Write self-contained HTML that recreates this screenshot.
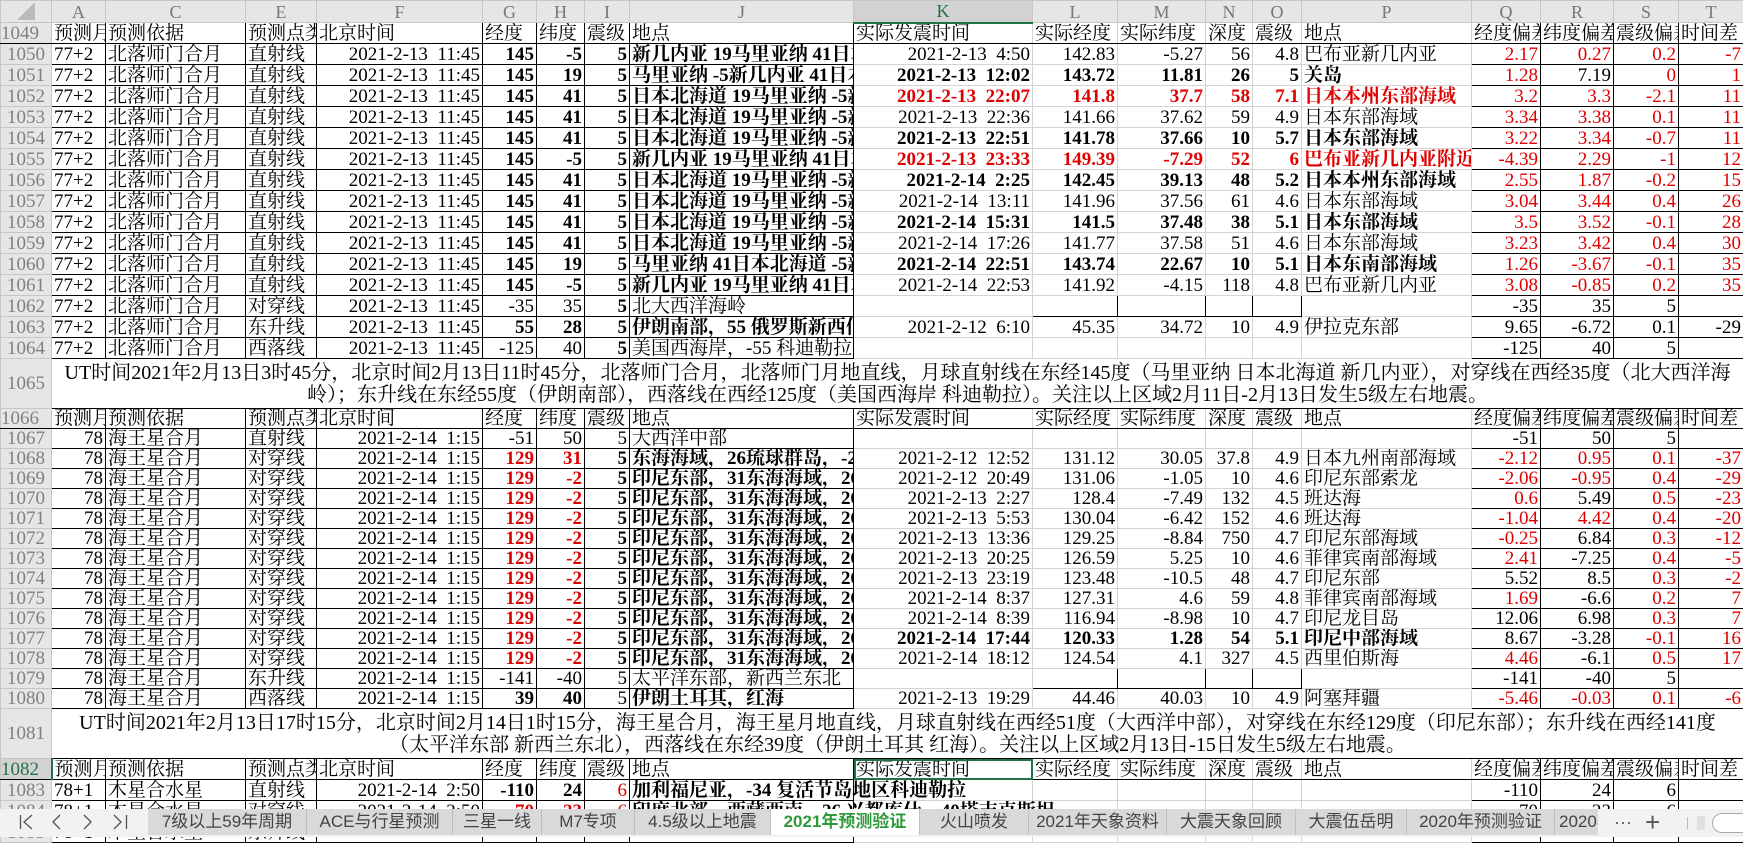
<!DOCTYPE html>
<html><head><meta charset="utf-8">
<style>
html,body{margin:0;padding:0;width:1743px;height:837px;overflow:hidden;background:#fff;}
table{border-collapse:collapse;table-layout:fixed;width:1743px;position:absolute;left:0;top:0;font-family:"Liberation Serif","Noto Serif CJK SC",serif;font-size:19px;color:#000;}
td{border:1px solid #d4d4d4;padding:0 2px;white-space:nowrap;overflow:hidden;line-height:18px;vertical-align:bottom;}
tr.c{height:22px;}
tr.c td{background:#e6e6e6;color:#777;text-align:center;font-size:18px;border-color:#c6c6c6;line-height:20px;vertical-align:middle;}
tr.c td.sel{background:#d2d2d2;color:#217346;border-bottom:2px solid #217346;}
td.n{background:#e6e6e6;color:#808080;text-align:center;border-color:#c6c6c6;padding:0;}
td.n.g{background:#d2d2d2;color:#217346;border-right:2px solid #217346;}
tr.d td:nth-child(n+2):nth-child(-n+9),tr.d td:nth-child(n+16){border-color:#000;}
tr.d td:nth-child(5),tr.d td:nth-child(6),tr.d td:nth-child(7),tr.d td:nth-child(8),
tr.d td:nth-child(n+10):nth-child(-n+14),tr.d td:nth-child(n+16){text-align:right;}
tr.d2 td:nth-child(2){text-align:right;}
tr.d.h td{border-bottom:1px solid #000;text-align:left !important;}
tr.r1{height:21px;}
tr.r2{height:20px;}
tr.tall{height:50px;}
.b{font-weight:bold;}
.e{color:#e00000;}
td.v{overflow:visible;}
td.m{text-align:center;vertical-align:middle;font-size:20px;line-height:22px;border-bottom:1px solid #000;}
td.selc{outline:2px solid #217346;outline-offset:-2px;}
#tabs{position:absolute;left:0;top:809px;width:1743px;height:28px;background:#f2f2f2;font-family:"Liberation Sans","Noto Sans CJK SC",sans-serif;font-size:17px;color:#444;}
#tabs .t{position:absolute;top:0;height:26px;line-height:26px;text-align:center;background:#d9d9d9;border-right:1px solid #bfbfbf;box-sizing:border-box;overflow:hidden;white-space:nowrap;}
#tabs .t.a{background:#fff;color:#2f9a3c;font-weight:bold;}
#tabs .nv{position:absolute;top:0;line-height:26px;font-size:20px;color:#555;}
</style></head><body>
<table>
<colgroup>
<col style="width:51px"><col style="width:54px"><col style="width:140px"><col style="width:71px"><col style="width:166px"><col style="width:54px"><col style="width:48px"><col style="width:45px"><col style="width:224px"><col style="width:179px"><col style="width:85px"><col style="width:88px"><col style="width:47px"><col style="width:49px"><col style="width:170px"><col style="width:69px"><col style="width:73px"><col style="width:65px"><col style="width:65px">
</colgroup>
<tr class="c"><td style="color:#bbb">◢</td><td>A</td><td>C</td><td>E</td><td>F</td><td>G</td><td>H</td><td>I</td><td>J</td><td class="sel">K</td><td>L</td><td>M</td><td>N</td><td>O</td><td>P</td><td>Q</td><td>R</td><td>S</td><td>T</td></tr>

<tr class="d h r1"><td class="n">1049</td><td>预测月份</td><td>预测依据</td><td>预测点类型</td><td>北京时间</td><td>经度</td><td>纬度</td><td>震级</td><td>地点</td><td>实际发震时间</td><td>实际经度</td><td>实际纬度</td><td>深度</td><td>震级</td><td>地点</td><td>经度偏差</td><td>纬度偏差</td><td>震级偏差</td><td>时间差</td></tr>
<tr class="d r1"><td class="n">1050</td><td>77+2</td><td>北落师门合月</td><td>直射线</td><td>2021-2-13&ensp;11:45</td><td class="b">145</td><td class="b">-5</td><td class="b">5</td><td class="b">新几内亚 19马里亚纳 41日本北海道</td><td>2021-2-13&ensp;4:50</td><td>142.83</td><td>-5.27</td><td>56</td><td>4.8</td><td>巴布亚新几内亚</td><td class="e">2.17</td><td class="e">0.27</td><td class="e">0.2</td><td class="e">-7</td></tr>
<tr class="d r1"><td class="n">1051</td><td>77+2</td><td>北落师门合月</td><td>直射线</td><td>2021-2-13&ensp;11:45</td><td class="b">145</td><td class="b">19</td><td class="b">5</td><td class="b">马里亚纳 -5新几内亚 41日本北海道</td><td class="b">2021-2-13&ensp;12:02</td><td class="b">143.72</td><td class="b">11.81</td><td class="b">26</td><td class="b">5</td><td class="b">关岛</td><td class="e">1.28</td><td>7.19</td><td class="e">0</td><td class="e">1</td></tr>
<tr class="d r1"><td class="n">1052</td><td>77+2</td><td>北落师门合月</td><td>直射线</td><td>2021-2-13&ensp;11:45</td><td class="b">145</td><td class="b">41</td><td class="b">5</td><td class="b">日本北海道 19马里亚纳 -5新几内亚</td><td class="b e">2021-2-13&ensp;22:07</td><td class="b e">141.8</td><td class="b e">37.7</td><td class="b e">58</td><td class="b e">7.1</td><td class="b e">日本本州东部海域</td><td class="e">3.2</td><td class="e">3.3</td><td class="e">-2.1</td><td class="e">11</td></tr>
<tr class="d r1"><td class="n">1053</td><td>77+2</td><td>北落师门合月</td><td>直射线</td><td>2021-2-13&ensp;11:45</td><td class="b">145</td><td class="b">41</td><td class="b">5</td><td class="b">日本北海道 19马里亚纳 -5新几内亚</td><td>2021-2-13&ensp;22:36</td><td>141.66</td><td>37.62</td><td>59</td><td>4.9</td><td>日本东部海域</td><td class="e">3.34</td><td class="e">3.38</td><td class="e">0.1</td><td class="e">11</td></tr>
<tr class="d r1"><td class="n">1054</td><td>77+2</td><td>北落师门合月</td><td>直射线</td><td>2021-2-13&ensp;11:45</td><td class="b">145</td><td class="b">41</td><td class="b">5</td><td class="b">日本北海道 19马里亚纳 -5新几内亚</td><td class="b">2021-2-13&ensp;22:51</td><td class="b">141.78</td><td class="b">37.66</td><td class="b">10</td><td class="b">5.7</td><td class="b">日本东部海域</td><td class="e">3.22</td><td class="e">3.34</td><td class="e">-0.7</td><td class="e">11</td></tr>
<tr class="d r1"><td class="n">1055</td><td>77+2</td><td>北落师门合月</td><td>直射线</td><td>2021-2-13&ensp;11:45</td><td class="b">145</td><td class="b">-5</td><td class="b">5</td><td class="b">新几内亚 19马里亚纳 41日本北海道</td><td class="b e">2021-2-13&ensp;23:33</td><td class="b e">149.39</td><td class="b e">-7.29</td><td class="b e">52</td><td class="b e">6</td><td class="b e">巴布亚新几内亚附近</td><td class="e">-4.39</td><td class="e">2.29</td><td class="e">-1</td><td class="e">12</td></tr>
<tr class="d r1"><td class="n">1056</td><td>77+2</td><td>北落师门合月</td><td>直射线</td><td>2021-2-13&ensp;11:45</td><td class="b">145</td><td class="b">41</td><td class="b">5</td><td class="b">日本北海道 19马里亚纳 -5新几内亚</td><td class="b">2021-2-14&ensp;2:25</td><td class="b">142.45</td><td class="b">39.13</td><td class="b">48</td><td class="b">5.2</td><td class="b">日本本州东部海域</td><td class="e">2.55</td><td class="e">1.87</td><td class="e">-0.2</td><td class="e">15</td></tr>
<tr class="d r1"><td class="n">1057</td><td>77+2</td><td>北落师门合月</td><td>直射线</td><td>2021-2-13&ensp;11:45</td><td class="b">145</td><td class="b">41</td><td class="b">5</td><td class="b">日本北海道 19马里亚纳 -5新几内亚</td><td>2021-2-14&ensp;13:11</td><td>141.96</td><td>37.56</td><td>61</td><td>4.6</td><td>日本东部海域</td><td class="e">3.04</td><td class="e">3.44</td><td class="e">0.4</td><td class="e">26</td></tr>
<tr class="d r1"><td class="n">1058</td><td>77+2</td><td>北落师门合月</td><td>直射线</td><td>2021-2-13&ensp;11:45</td><td class="b">145</td><td class="b">41</td><td class="b">5</td><td class="b">日本北海道 19马里亚纳 -5新几内亚</td><td class="b">2021-2-14&ensp;15:31</td><td class="b">141.5</td><td class="b">37.48</td><td class="b">38</td><td class="b">5.1</td><td class="b">日本东部海域</td><td class="e">3.5</td><td class="e">3.52</td><td class="e">-0.1</td><td class="e">28</td></tr>
<tr class="d r1"><td class="n">1059</td><td>77+2</td><td>北落师门合月</td><td>直射线</td><td>2021-2-13&ensp;11:45</td><td class="b">145</td><td class="b">41</td><td class="b">5</td><td class="b">日本北海道 19马里亚纳 -5新几内亚</td><td>2021-2-14&ensp;17:26</td><td>141.77</td><td>37.58</td><td>51</td><td>4.6</td><td>日本东部海域</td><td class="e">3.23</td><td class="e">3.42</td><td class="e">0.4</td><td class="e">30</td></tr>
<tr class="d r1"><td class="n">1060</td><td>77+2</td><td>北落师门合月</td><td>直射线</td><td>2021-2-13&ensp;11:45</td><td class="b">145</td><td class="b">19</td><td class="b">5</td><td class="b">马里亚纳 41日本北海道 -5新几内亚</td><td class="b">2021-2-14&ensp;22:51</td><td class="b">143.74</td><td class="b">22.67</td><td class="b">10</td><td class="b">5.1</td><td class="b">日本东南部海域</td><td class="e">1.26</td><td class="e">-3.67</td><td class="e">-0.1</td><td class="e">35</td></tr>
<tr class="d r1"><td class="n">1061</td><td>77+2</td><td>北落师门合月</td><td>直射线</td><td>2021-2-13&ensp;11:45</td><td class="b">145</td><td class="b">-5</td><td class="b">5</td><td class="b">新几内亚 19马里亚纳 41日本北海道</td><td>2021-2-14&ensp;22:53</td><td>141.92</td><td>-4.15</td><td>118</td><td>4.8</td><td>巴布亚新几内亚</td><td class="e">3.08</td><td class="e">-0.85</td><td class="e">0.2</td><td class="e">35</td></tr>
<tr class="d r1"><td class="n">1062</td><td>77+2</td><td>北落师门合月</td><td>对穿线</td><td>2021-2-13&ensp;11:45</td><td>-35</td><td>35</td><td class="b">5</td><td>北大西洋海岭</td><td></td><td style="border-color:#000"></td><td style="border-color:#000"></td><td style="border-color:#000"></td><td style="border-color:#000"></td><td></td><td>-35</td><td>35</td><td>5</td><td></td></tr>
<tr class="d r1"><td class="n">1063</td><td>77+2</td><td>北落师门合月</td><td>东升线</td><td>2021-2-13&ensp;11:45</td><td class="b">55</td><td class="b">28</td><td class="b">5</td><td class="b">伊朗南部，55 俄罗斯新西伯利亚</td><td>2021-2-12&ensp;6:10</td><td>45.35</td><td>34.72</td><td>10</td><td>4.9</td><td>伊拉克东部</td><td>9.65</td><td>-6.72</td><td>0.1</td><td>-29</td></tr>
<tr class="d r1"><td class="n">1064</td><td>77+2</td><td>北落师门合月</td><td>西落线</td><td>2021-2-13&ensp;11:45</td><td>-125</td><td>40</td><td class="b">5</td><td>美国西海岸，-55 科迪勒拉</td><td></td><td></td><td></td><td></td><td></td><td></td><td>-125</td><td>40</td><td>5</td><td></td></tr>
<tr class="tall"><td class="n" style="vertical-align:middle">1065</td><td class="m" colspan="18">UT时间2021年2月13日3时45分，北京时间2月13日11时45分，北落师门合月，北落师门月地直线，月球直射线在东经145度（马里亚纳 日本北海道 新几内亚），对穿线在西经35度（北大西洋海<br>岭）；东升线在东经55度（伊朗南部），西落线在西经125度（美国西海岸 科迪勒拉）。关注以上区域2月11日-2月13日发生5级左右地震。</td></tr>

<tr class="d h r2"><td class="n">1066</td><td>预测月份</td><td>预测依据</td><td>预测点类型</td><td>北京时间</td><td>经度</td><td>纬度</td><td>震级</td><td>地点</td><td>实际发震时间</td><td>实际经度</td><td>实际纬度</td><td>深度</td><td>震级</td><td>地点</td><td>经度偏差</td><td>纬度偏差</td><td>震级偏差</td><td>时间差</td></tr>
<tr class="d d2 r2"><td class="n">1067</td><td>78</td><td>海王星合月</td><td>直射线</td><td>2021-2-14&ensp;1:15</td><td>-51</td><td>50</td><td>5</td><td>大西洋中部</td><td></td><td></td><td></td><td></td><td></td><td></td><td>-51</td><td>50</td><td>5</td><td></td></tr>
<tr class="d d2 r2"><td class="n">1068</td><td>78</td><td>海王星合月</td><td>对穿线</td><td>2021-2-14&ensp;1:15</td><td class="b e">129</td><td class="b e">31</td><td class="b">5</td><td class="b">东海海域，26琉球群岛，-2印尼东部</td><td>2021-2-12&ensp;12:52</td><td>131.12</td><td>30.05</td><td>37.8</td><td>4.9</td><td>日本九州南部海域</td><td class="e">-2.12</td><td class="e">0.95</td><td class="e">0.1</td><td class="e">-37</td></tr>
<tr class="d d2 r2"><td class="n">1069</td><td>78</td><td>海王星合月</td><td>对穿线</td><td>2021-2-14&ensp;1:15</td><td class="b e">129</td><td class="b e">-2</td><td class="b">5</td><td class="b">印尼东部，31东海海域，26琉球</td><td>2021-2-12&ensp;20:49</td><td>131.06</td><td>-1.05</td><td>10</td><td>4.6</td><td>印尼东部索龙</td><td class="e">-2.06</td><td class="e">-0.95</td><td class="e">0.4</td><td class="e">-29</td></tr>
<tr class="d d2 r2"><td class="n">1070</td><td>78</td><td>海王星合月</td><td>对穿线</td><td>2021-2-14&ensp;1:15</td><td class="b e">129</td><td class="b e">-2</td><td class="b">5</td><td class="b">印尼东部，31东海海域，26琉球</td><td>2021-2-13&ensp;2:27</td><td>128.4</td><td>-7.49</td><td>132</td><td>4.5</td><td>班达海</td><td class="e">0.6</td><td>5.49</td><td class="e">0.5</td><td class="e">-23</td></tr>
<tr class="d d2 r2"><td class="n">1071</td><td>78</td><td>海王星合月</td><td>对穿线</td><td>2021-2-14&ensp;1:15</td><td class="b e">129</td><td class="b e">-2</td><td class="b">5</td><td class="b">印尼东部，31东海海域，26琉球</td><td>2021-2-13&ensp;5:53</td><td>130.04</td><td>-6.42</td><td>152</td><td>4.6</td><td>班达海</td><td class="e">-1.04</td><td class="e">4.42</td><td class="e">0.4</td><td class="e">-20</td></tr>
<tr class="d d2 r2"><td class="n">1072</td><td>78</td><td>海王星合月</td><td>对穿线</td><td>2021-2-14&ensp;1:15</td><td class="b e">129</td><td class="b e">-2</td><td class="b">5</td><td class="b">印尼东部，31东海海域，26琉球</td><td>2021-2-13&ensp;13:36</td><td>129.25</td><td>-8.84</td><td>750</td><td>4.7</td><td>印尼东部海域</td><td class="e">-0.25</td><td>6.84</td><td class="e">0.3</td><td class="e">-12</td></tr>
<tr class="d d2 r2"><td class="n">1073</td><td>78</td><td>海王星合月</td><td>对穿线</td><td>2021-2-14&ensp;1:15</td><td class="b e">129</td><td class="b e">-2</td><td class="b">5</td><td class="b">印尼东部，31东海海域，26琉球</td><td>2021-2-13&ensp;20:25</td><td>126.59</td><td>5.25</td><td>10</td><td>4.6</td><td>菲律宾南部海域</td><td class="e">2.41</td><td>-7.25</td><td class="e">0.4</td><td class="e">-5</td></tr>
<tr class="d d2 r2"><td class="n">1074</td><td>78</td><td>海王星合月</td><td>对穿线</td><td>2021-2-14&ensp;1:15</td><td class="b e">129</td><td class="b e">-2</td><td class="b">5</td><td class="b">印尼东部，31东海海域，26琉球</td><td>2021-2-13&ensp;23:19</td><td>123.48</td><td>-10.5</td><td>48</td><td>4.7</td><td>印尼东部</td><td>5.52</td><td>8.5</td><td class="e">0.3</td><td class="e">-2</td></tr>
<tr class="d d2 r2"><td class="n">1075</td><td>78</td><td>海王星合月</td><td>对穿线</td><td>2021-2-14&ensp;1:15</td><td class="b e">129</td><td class="b e">-2</td><td class="b">5</td><td class="b">印尼东部，31东海海域，26琉球</td><td>2021-2-14&ensp;8:37</td><td>127.31</td><td>4.6</td><td>59</td><td>4.8</td><td>菲律宾南部海域</td><td class="e">1.69</td><td>-6.6</td><td class="e">0.2</td><td class="e">7</td></tr>
<tr class="d d2 r2"><td class="n">1076</td><td>78</td><td>海王星合月</td><td>对穿线</td><td>2021-2-14&ensp;1:15</td><td class="b e">129</td><td class="b e">-2</td><td class="b">5</td><td class="b">印尼东部，31东海海域，26琉球</td><td>2021-2-14&ensp;8:39</td><td>116.94</td><td>-8.98</td><td>10</td><td>4.7</td><td>印尼龙目岛</td><td>12.06</td><td>6.98</td><td class="e">0.3</td><td class="e">7</td></tr>
<tr class="d d2 r2"><td class="n">1077</td><td>78</td><td>海王星合月</td><td>对穿线</td><td>2021-2-14&ensp;1:15</td><td class="b e">129</td><td class="b e">-2</td><td class="b">5</td><td class="b">印尼东部，31东海海域，26琉球</td><td class="b">2021-2-14&ensp;17:44</td><td class="b">120.33</td><td class="b">1.28</td><td class="b">54</td><td class="b">5.1</td><td class="b">印尼中部海域</td><td>8.67</td><td>-3.28</td><td class="e">-0.1</td><td class="e">16</td></tr>
<tr class="d d2 r2"><td class="n">1078</td><td>78</td><td>海王星合月</td><td>对穿线</td><td>2021-2-14&ensp;1:15</td><td class="b e">129</td><td class="b e">-2</td><td class="b">5</td><td class="b">印尼东部，31东海海域，26琉球</td><td>2021-2-14&ensp;18:12</td><td>124.54</td><td>4.1</td><td>327</td><td>4.5</td><td>西里伯斯海</td><td class="e">4.46</td><td>-6.1</td><td class="e">0.5</td><td class="e">17</td></tr>
<tr class="d d2 r2"><td class="n">1079</td><td>78</td><td>海王星合月</td><td>东升线</td><td>2021-2-14&ensp;1:15</td><td>-141</td><td>-40</td><td>5</td><td>太平洋东部，新西兰东北</td><td></td><td style="border-color:#000"></td><td style="border-color:#000"></td><td style="border-color:#000"></td><td style="border-color:#000"></td><td></td><td>-141</td><td>-40</td><td>5</td><td></td></tr>
<tr class="d d2 r2"><td class="n">1080</td><td>78</td><td>海王星合月</td><td>西落线</td><td>2021-2-14&ensp;1:15</td><td class="b">39</td><td class="b">40</td><td>5</td><td class="b">伊朗土耳其，红海</td><td>2021-2-13&ensp;19:29</td><td>44.46</td><td>40.03</td><td>10</td><td>4.9</td><td>阿塞拜疆</td><td class="e">-5.46</td><td class="e">-0.03</td><td class="e">0.1</td><td class="e">-6</td></tr>
<tr class="tall"><td class="n" style="vertical-align:middle">1081</td><td class="m" colspan="18">UT时间2021年2月13日17时15分，北京时间2月14日1时15分，海王星合月，海王星月地直线，月球直射线在西经51度（大西洋中部），对穿线在东经129度（印尼东部）；东升线在西经141度<br>（太平洋东部 新西兰东北），西落线在东经39度（伊朗土耳其 红海）。关注以上区域2月13日-15日发生5级左右地震。</td></tr>

<tr class="d h r1"><td class="n g">1082</td><td>预测月份</td><td>预测依据</td><td>预测点类型</td><td>北京时间</td><td>经度</td><td>纬度</td><td>震级</td><td>地点</td><td class="selc">实际发震时间</td><td>实际经度</td><td>实际纬度</td><td>深度</td><td>震级</td><td>地点</td><td>经度偏差</td><td>纬度偏差</td><td>震级偏差</td><td>时间差</td></tr>
<tr class="d r1"><td class="n">1083</td><td>78+1</td><td>木星合水星</td><td>直射线</td><td>2021-2-14&ensp;2:50</td><td class="b">-110</td><td class="b">24</td><td class="e">6</td><td class="b v">加利福尼亚，-34 复活节岛地区科迪勒拉</td><td></td><td></td><td></td><td></td><td></td><td></td><td>-110</td><td>24</td><td>6</td><td></td></tr>
<tr class="d r1"><td class="n">1084</td><td>78+1</td><td>木星合水星</td><td>对穿线</td><td>2021-2-14&ensp;2:50</td><td class="b e">70</td><td class="b e">23</td><td class="e">6</td><td class="b v">印度北部，西藏西南，26 兴都库什，40塔吉克斯坦</td><td></td><td></td><td></td><td></td><td></td><td></td><td>70</td><td>23</td><td>6</td><td></td></tr>
<tr class="d r1"><td class="n">1085</td><td>78+1</td><td>木星合水星</td><td>东升线</td><td></td><td></td><td></td><td></td><td></td><td></td><td></td><td></td><td></td><td></td><td></td><td></td><td></td><td></td><td></td></tr>
</table>

<div id="tabs">
<svg style="position:absolute;left:0;top:0" width="148" height="28">
<g fill="none" stroke="#555" stroke-width="1.3">
<line x1="20.5" y1="6" x2="20.5" y2="20"/><polyline points="32,6 24,13 32,20"/>
<polyline points="60,6 53,13 60,20"/>
<polyline points="84,6 91,13 84,20"/>
<polyline points="114,6 121,13 114,20"/><line x1="126.5" y1="6" x2="126.5" y2="20"/>
</g></svg>
<div class="t" style="left:148px;width:159px">7级以上59年周期</div>
<div class="t" style="left:307px;width:146px">ACE与行星预测</div>
<div class="t" style="left:453px;width:89px">三星一线</div>
<div class="t" style="left:542px;width:93px">M7专项</div>
<div class="t" style="left:635px;width:136px">4.5级以上地震</div>
<div class="t a" style="left:771px;width:149px">2021年预测验证</div>
<div class="t" style="left:920px;width:109px">火山喷发</div>
<div class="t" style="left:1029px;width:138px">2021年天象资料</div>
<div class="t" style="left:1167px;width:129px">大震天象回顾</div>
<div class="t" style="left:1296px;width:111px">大震伍岳明</div>
<div class="t" style="left:1407px;width:148px">2020年预测验证</div>
<div class="t" style="left:1555px;width:43px;text-align:left;padding-left:4px;border-right:none">2020年</div>
<span class="nv" style="left:1614px;font-size:18px">···</span>
<span class="nv" style="left:1645px;font-size:26px;font-weight:300">+</span>
<div style="position:absolute;left:1687px;top:8px;width:1px;height:12px;background:#bbb"></div>
<div style="position:absolute;left:1697px;top:7px;width:8px;height:14px;background:#e0e0e0"></div>
<div style="position:absolute;left:1712px;top:4px;width:40px;height:18px;border:1px solid #aaa;border-radius:10px;background:#fff"></div>
</div>
</body></html>
